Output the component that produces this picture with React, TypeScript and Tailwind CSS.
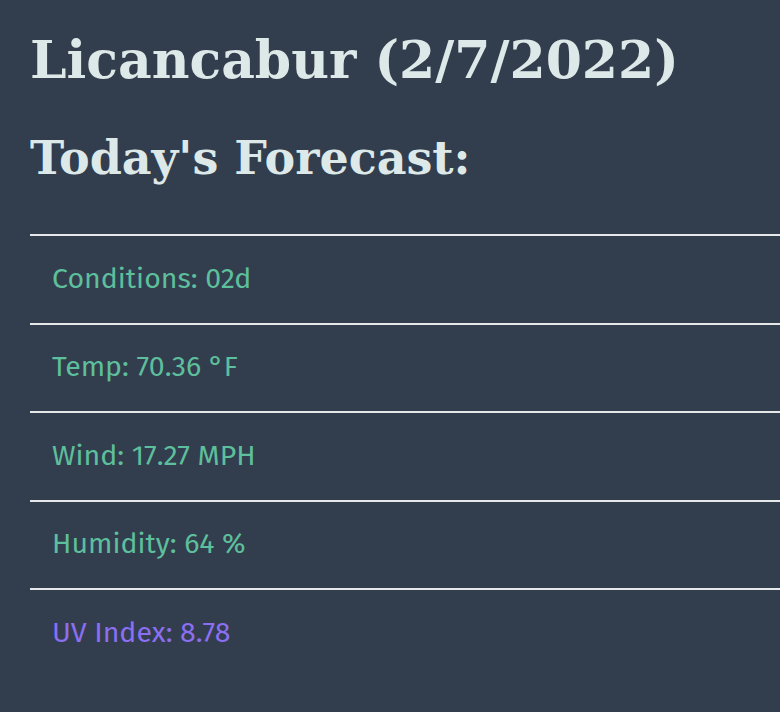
export default function App() {
  const rows = [
    { label: 'Conditions: 02d', tone: 'text-[#5dbf9c]' },
    { label: 'Temp: 70.36 °F', tone: 'text-[#5dbf9c]' },
    { label: 'Wind: 17.27 MPH', tone: 'text-[#5dbf9c]' },
    { label: 'Humidity: 64 %', tone: 'text-[#5dbf9c]' },
    { label: 'UV Index: 8.78', tone: 'text-[#8b6ff2]' },
  ]

  return (
    <div className="min-h-screen w-full overflow-hidden bg-[#323d4d] pl-[30px]">
      {/* Headings */}
      <h1 className="pt-[28px] font-['DejaVu_Serif',serif] text-[52px] font-bold leading-[64px] text-[#dde8e8] whitespace-nowrap">
        Licancabur (2/7/2022)
      </h1>
      <h2 className="mt-[40px] font-['DejaVu_Serif',serif] text-[46px] font-bold leading-[52px] text-[#dde8e8] whitespace-nowrap">
        Today&apos;s Forecast:
      </h2>

      {/* Forecast list */}
      <ul className="mt-[50px] font-['Fira_Sans','Open_Sans',sans-serif]">
        {rows.map((row) => (
          <li
            key={row.label}
            className={`border-t-2 border-[#e6e8ea] pl-[22px] h-[88.5px] flex items-center text-[28.5px] ${row.tone}`}
          >
            {row.label}
          </li>
        ))}
      </ul>
    </div>
  )
}
